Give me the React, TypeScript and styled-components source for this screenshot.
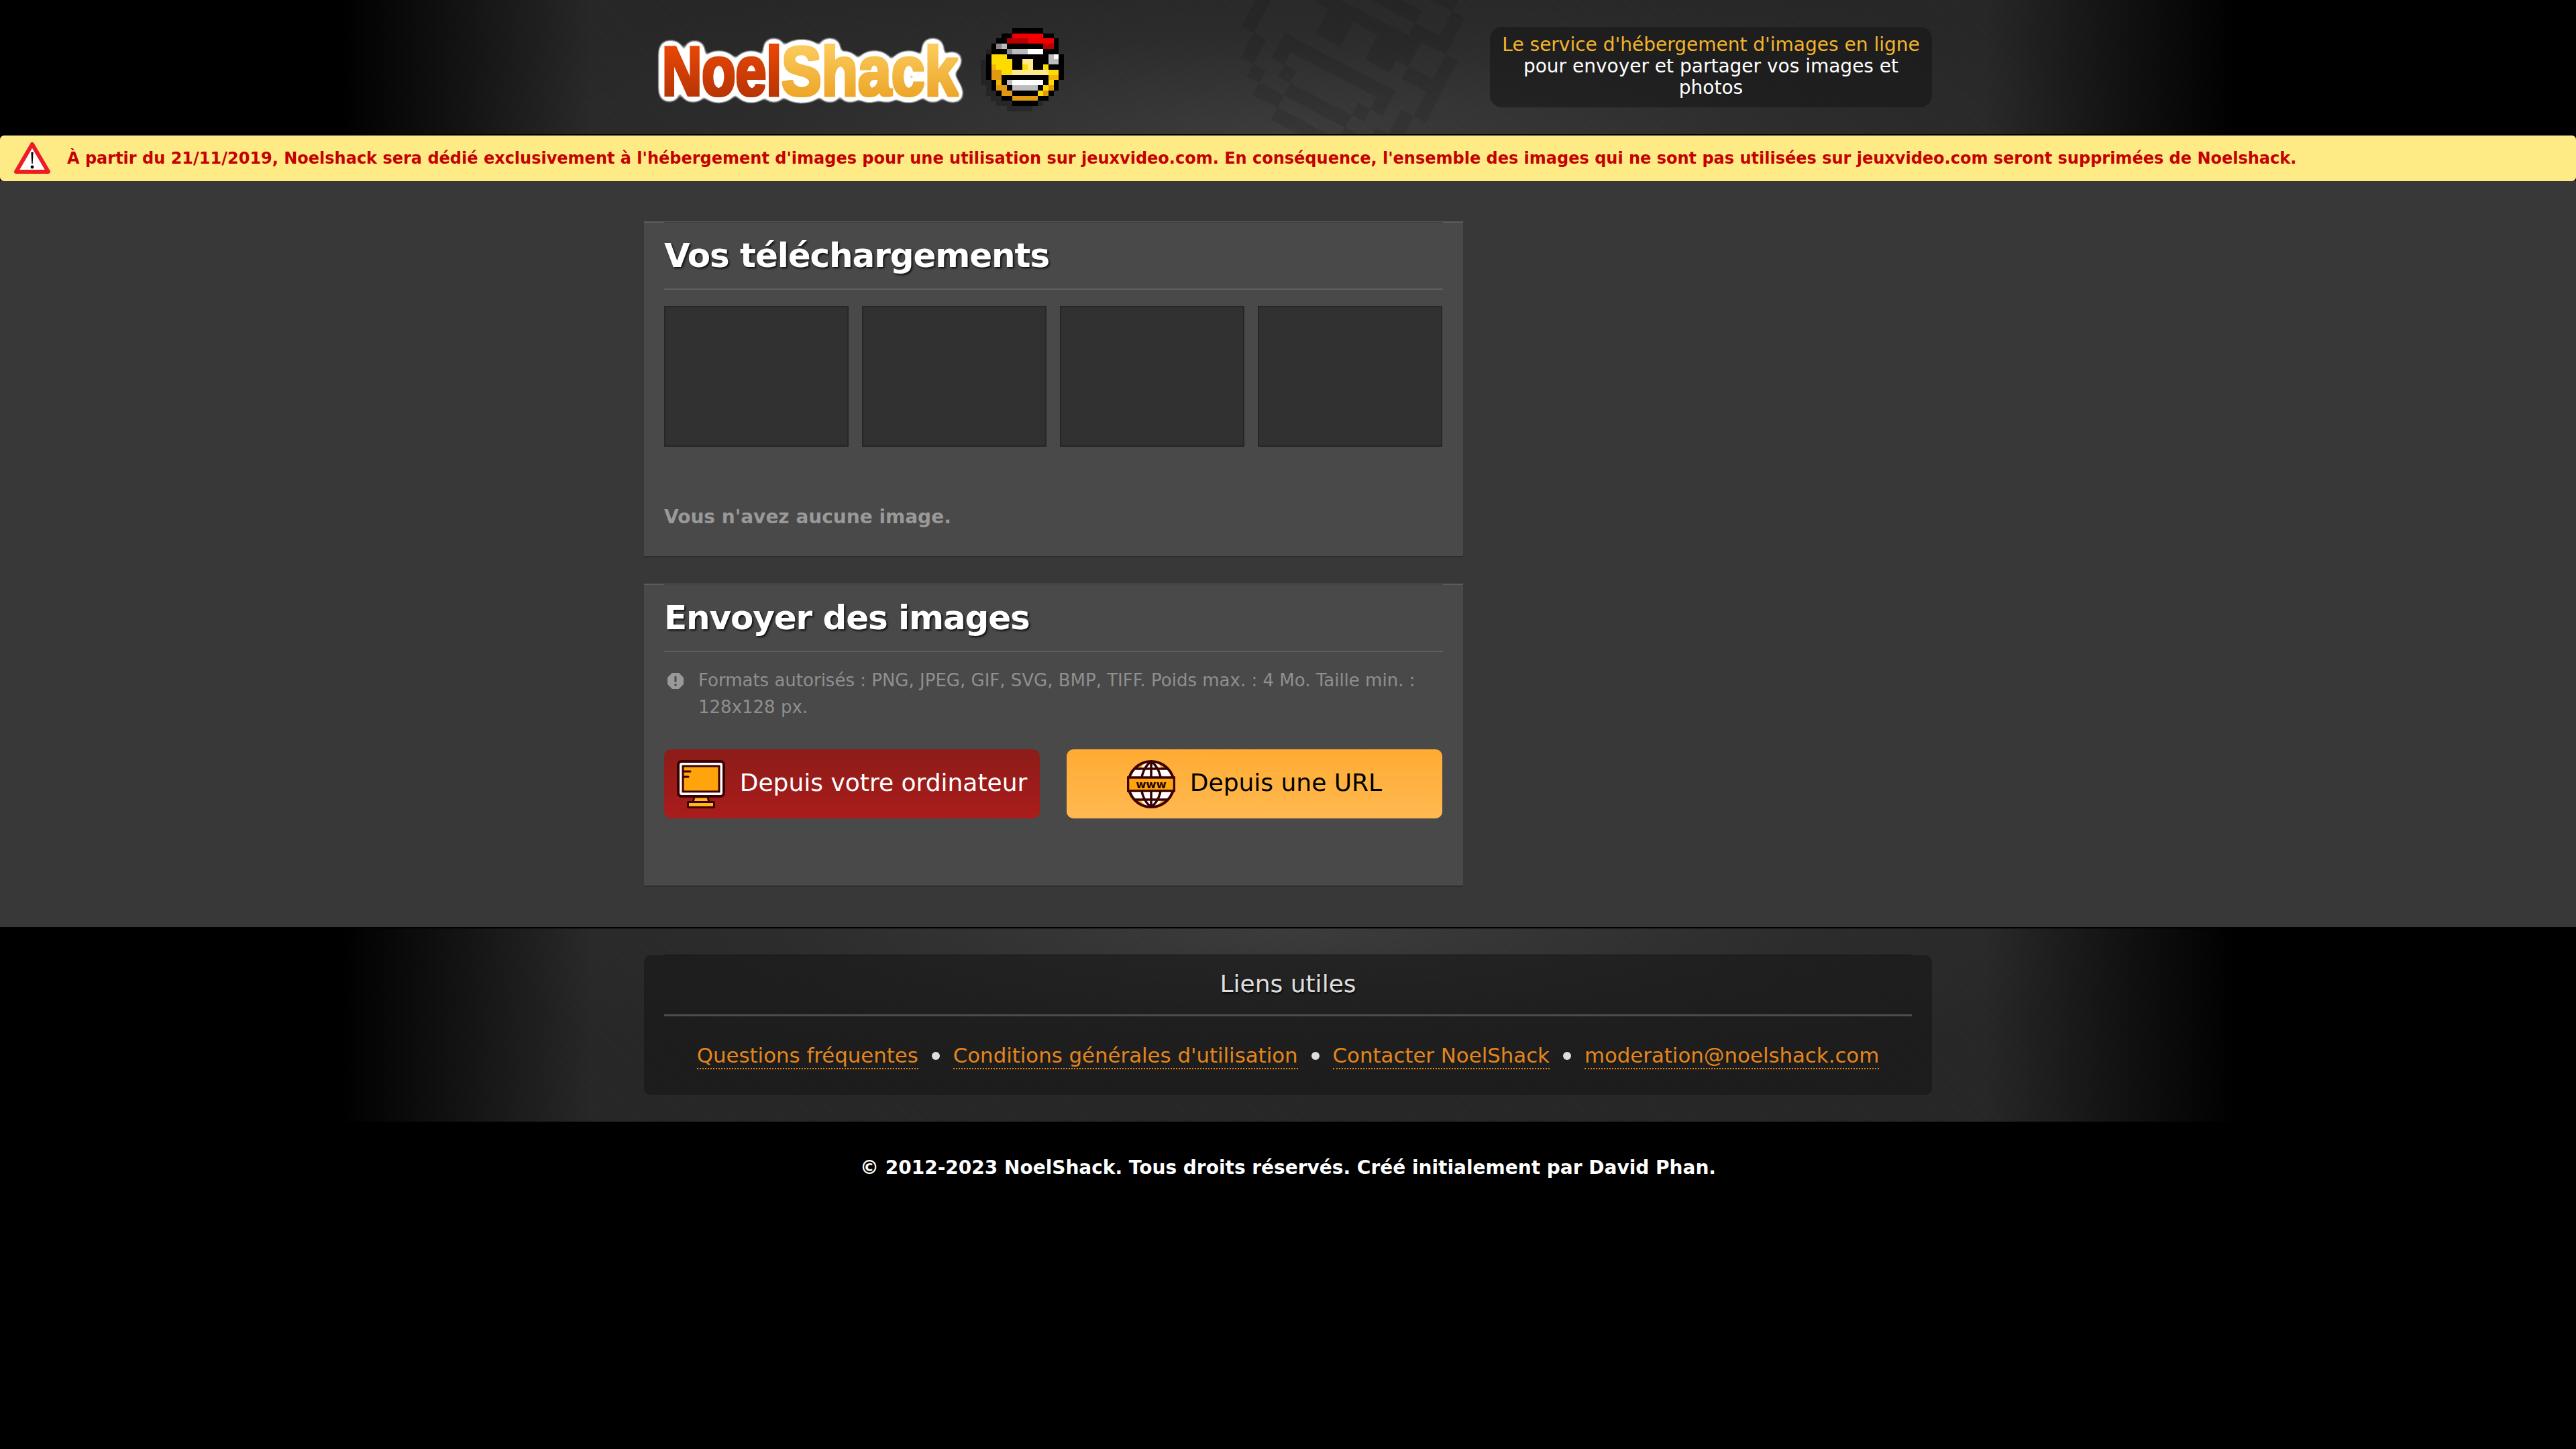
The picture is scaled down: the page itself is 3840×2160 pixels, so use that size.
import React from 'react';
import styled, { createGlobalStyle } from 'styled-components';

const GlobalStyle = createGlobalStyle`
  html, body {
    margin: 0;
    padding: 0;
    background: #000;
    font-family: "DejaVu Sans", sans-serif;
  }
  * { box-sizing: border-box; }
`;

const SMILEY = [
  '.....KKKKKK....',
  '...KKRRRRRRKK..',
  '..KKDDDDRRRRRK.',
  '.KGLKKKKKKKDDK.',
  '.KKKGLLLWWWKKK.',
  'KYYYKKKKKKKKLWK',
  'KYYYYKKPPKKKLLK',
  'KOYYYKKYPKKYKKK',
  'KAAYYPPPPPPPYYK',
  'KAAKKKKKKKKKOOK',
  '.KOKLWWWWWWKYK.',
  '.KAAKLLLLLKYAK.',
  '..KAAKKKKKYAK..',
  '...KKAAAAAKK...',
  '.....KKKKK.....',
];

const PIXEL_COLORS: Record<string, string> = {
  K: '#000000',
  R: '#f00000',
  D: '#b80000',
  G: '#8a8a8a',
  L: '#bdbdbd',
  W: '#ffffff',
  Y: '#ffdc00',
  O: '#f2b705',
  A: '#e09a12',
  P: '#ffe98a',
};

const PixelFace: React.FC<{ ghost?: boolean; className?: string }> = ({ ghost, className }) => (
  <svg className={className} viewBox="0 0 15 15" shapeRendering="crispEdges">
    {SMILEY.map((row, y) =>
      row.split('').map((c, x) => {
        if (c === '.') return null;
        if (ghost && c !== 'K') return null;
        return <rect key={`${x}-${y}`} x={x} y={y} width={1.02} height={1.02} fill={ghost ? '#000' : PIXEL_COLORS[c]} />;
      })
    )}
  </svg>
);

const bandBackground = (anchor: string) => `
  linear-gradient(90deg, #000 13.2%, rgba(0,0,0,0) 23%, rgba(0,0,0,0) 77%, #000 86.8%),
  repeating-linear-gradient(45deg, rgba(255,255,255,0.012) 0 1px, rgba(0,0,0,0.02) 1px 3px),
  radial-gradient(ellipse 1300px 240px at 50% ${anchor}, #3c3c3c 0%, #2c2c2c 60%, #272727 100%)
`;

const Header = styled.header`
  position: relative;
  height: 202px;
  overflow: hidden;
  border-bottom: 2px solid #000;
  background: ${bandBackground('100%')};
`;

const Wrap = styled.div`
  position: relative;
  width: 1920px;
  margin: 0 auto;
`;

const HeaderInner = styled(Wrap)`
  height: 200px;
  display: flex;
  align-items: center;
  justify-content: space-between;
`;

const Watermark = styled(PixelFace)`
  position: absolute;
  left: 897px;
  top: -90px;
  width: 310px;
  height: 310px;
  opacity: 0.085;
  transform: rotate(27.5deg);
`;

const Brand = styled.div`
  display: flex;
  align-items: center;
`;

const LogoArt = styled.svg`
  display: block;
  width: 480px;
  height: 110px;
  margin-left: 26px;
  overflow: visible;
`;

const LogoFace = styled(PixelFace)`
  width: 116px;
  height: 120px;
  margin-left: 4px;
  filter: drop-shadow(-8px 8px 0 rgba(0, 0, 0, 0.22));
`;

const Tagline = styled.div`
  position: relative;
  width: 659px;
  height: 120px;
  padding: 11px 10px 0;
  border-radius: 18px;
  background: rgba(20, 20, 20, 0.52);
  color: #fff;
  font-size: 28px;
  line-height: 32px;
  text-align: center;
`;

const TaglineAccent = styled.div`
  color: #f4b42c;
`;

const Notice = styled.div`
  display: flex;
  align-items: center;
  height: 68px;
  padding-left: 20px;
  border-radius: 6px;
  background: #ffeb85;
  color: #c40000;
  font-size: 24px;
  font-weight: 700;
`;

const NoticeIcon = styled.svg`
  width: 56px;
  height: 50px;
  margin-right: 24px;
  flex-shrink: 0;
`;

const Main = styled.main`
  height: 1114px;
  padding-top: 60px;
  border-bottom: 2px solid #000;
  background: #383838;
`;

const Panel = styled.section<{ $height: number }>`
  width: 1221px;
  height: ${(p) => p.$height}px;
  margin-bottom: 39px;
  padding: 0 30px;
  background: #494949;
  border-top: 2px solid #5c5c5c;
  border-bottom: 2px solid #2e2e2e;
`;

const PanelTitle = styled.h2`
  margin: 0;
  height: 100px;
  padding-top: 14px;
  border-bottom: 2px solid #5e5e5e;
  box-shadow: 0 -1px 0 #3f3f3f;
  color: #fff;
  font-size: 50px;
  line-height: 70px;
  letter-spacing: -1.1px;
  font-weight: 700;
  text-shadow: 2px 2px 3px rgba(0, 0, 0, 0.8);
`;

const TileRow = styled.div`
  display: grid;
  grid-template-columns: repeat(4, 275px);
  gap: 20px;
  margin-top: 24px;
`;

const Tile = styled.div`
  height: 210px;
  background: #313131;
  border: 2px solid #262626;
`;

const EmptyNote = styled.p`
  margin: 87px 0 0;
  color: #999;
  font-size: 28px;
  line-height: 36px;
  font-weight: 700;
`;

const FormatNote = styled.div`
  display: flex;
  margin-top: 22px;
  color: #8f8f8f;
  font-size: 26px;
  line-height: 40px;
`;

const FormatIcon = styled.svg`
  width: 26px;
  height: 26px;
  margin: 8px 21px 0 4px;
  flex-shrink: 0;
`;

const ButtonRow = styled.div`
  display: grid;
  grid-template-columns: 560px 560px;
  gap: 40px;
  margin-top: 43px;
`;

const UploadButton = styled.button<{ $variant: 'red' | 'orange' }>`
  display: flex;
  align-items: center;
  justify-content: center;
  gap: 22px;
  height: 103px;
  padding: 0;
  border: 0;
  border-radius: 10px;
  font-family: inherit;
  font-size: 36px;
  color: ${(p) => (p.$variant === 'red' ? '#fff' : '#000')};
  background: ${(p) =>
    p.$variant === 'red'
      ? 'linear-gradient(180deg, #8c1c18 0%, #aa1c1c 100%)'
      : 'linear-gradient(180deg, #ffab33 0%, #ffb950 100%)'};
`;

const ButtonLabel = styled.span`
  position: relative;
  top: -2px;
`;

const ButtonIcon = styled.svg`
  width: 72px;
  height: 72px;
  flex-shrink: 0;
`;

const FooterBand = styled.footer`
  height: 288px;
  padding-top: 40px;
  background: ${bandBackground('0%')};
`;

const LinksBox = styled.div`
  width: 1920px;
  height: 208px;
  margin: 0 auto;
  padding: 0 30px;
  border-radius: 10px;
  background: rgba(20, 20, 20, 0.52);
`;

const LinksTitle = styled.div`
  height: 91px;
  padding-top: 20px;
  border-bottom: 3px solid #4c4c4c;
  box-shadow: 0 -1px 0 #111;
  color: #ddd;
  font-size: 36px;
  line-height: 46px;
  text-align: center;
  text-shadow: 1px 2px 3px rgba(0, 0, 0, 0.8);
`;

const LinkRow = styled.nav`
  display: flex;
  justify-content: center;
  align-items: center;
  margin-top: 39px;
`;

const FooterLink = styled.a`
  color: #e4861c;
  font-size: 30.8px;
  line-height: 38px;
  border-bottom: 2px dotted #e4861c;
`;

const Bullet = styled.span`
  width: 12px;
  height: 12px;
  margin: 0 20px;
  border-radius: 50%;
  background: #ddd;
`;

const Copyright = styled.p`
  margin: 51px 0 0;
  color: #fff;
  font-size: 28px;
  line-height: 36px;
  font-weight: 700;
  text-align: center;
`;

const Page = styled.div`
  min-height: 2160px;
  background: #000;
`;

const links = [
  'Questions fréquentes',
  "Conditions générales d'utilisation",
  'Contacter NoelShack',
  'moderation@noelshack.com',
];

const Logo: React.FC = () => (
  <LogoArt viewBox="0 0 480 110">
    <defs>
      <linearGradient id="noelRed" x1="0" y1="0" x2="0" y2="1">
        <stop offset="0" stopColor="#f54a05" />
        <stop offset="1" stopColor="#a83005" />
      </linearGradient>
      <linearGradient id="noelGold" x1="0" y1="0" x2="0" y2="1">
        <stop offset="0" stopColor="#ffd468" />
        <stop offset="1" stopColor="#e89a1a" />
      </linearGradient>
      {/* fattens the letters and puts the white sticker edge behind them */}
      <filter id="logoSticker" filterUnits="userSpaceOnUse" x="-30" y="-20" width="540" height="150" colorInterpolationFilters="sRGB">
        <feMorphology in="SourceGraphic" operator="dilate" radius="2" result="fat" />
        <feGaussianBlur in="SourceAlpha" stdDeviation="6.5" result="soft" />
        <feComponentTransfer in="soft" result="edge">
          <feFuncA type="linear" slope="25" intercept="-0.5" />
        </feComponentTransfer>
        <feFlood floodColor="#fff" result="white" />
        <feComposite in="white" in2="edge" operator="in" result="sticker" />
        <feMerge>
          <feMergeNode in="sticker" />
          <feMergeNode in="fat" />
        </feMerge>
      </filter>
    </defs>
    <g filter="url(#logoSticker)" fontFamily="'Liberation Sans', sans-serif" fontWeight="700" fontSize="104">
      <text x="1" y="97" textLength="178" lengthAdjust="spacingAndGlyphs" fill="url(#noelRed)">Noel</text>
      <text x="179" y="97" textLength="263" lengthAdjust="spacingAndGlyphs" fill="url(#noelGold)">Shack</text>
    </g>
  </LogoArt>
);

const MonitorIcon: React.FC = () => (
  <ButtonIcon viewBox="0 0 72 72">
    <rect x="2" y="2" width="68" height="52" rx="5" fill="#fff" stroke="#3a0000" strokeWidth="4" />
    <rect x="9" y="9" width="54" height="38" fill="#ffa40c" stroke="#3a0000" strokeWidth="3" />
    <path d="M11 17h9M11 25h6" stroke="#3a0000" strokeWidth="3" strokeLinecap="round" />
    <path d="M26 55h20l2 8H24z" fill="#ffb81c" stroke="#3a0000" strokeWidth="3" strokeLinejoin="round" />
    <rect x="16.5" y="62.5" width="39" height="8" rx="1" fill="#ffb81c" stroke="#3a0000" strokeWidth="3" />
  </ButtonIcon>
);

const GlobeIcon: React.FC = () => (
  <ButtonIcon viewBox="0 0 72 72">
    <defs>
      <clipPath id="globeClip">
        <ellipse cx="36" cy="36" rx="34" ry="34" />
      </clipPath>
    </defs>
    <circle cx="36" cy="36" r="34" fill="#ffa40c" />
    <g clipPath="url(#globeClip)">
      <ellipse cx="36" cy="36" rx="22" ry="34" fill="#fff" />
      <rect x="0" y="14" width="72" height="12" fill="#fff" />
      <rect x="0" y="46" width="72" height="12" fill="#fff" />
      <path d="M36 0v72M36 2C16 16 16 56 36 70M36 2c20 14 20 54 0 68" fill="none" stroke="#3a0000" strokeWidth="3.5" />
      <path d="M0 13h72M0 59h72" stroke="#3a0000" strokeWidth="3.5" />
    </g>
    <circle cx="36" cy="36" r="34" fill="none" stroke="#3a0000" strokeWidth="4" />
    <rect x="1.5" y="26" width="69" height="20" fill="#ffa40c" stroke="#3a0000" strokeWidth="3.5" />
    <text x="36" y="41.5" textAnchor="middle" fontFamily="'DejaVu Sans', sans-serif" fontWeight="700" fontSize="16.5" fill="#1a0000">www</text>
  </ButtonIcon>
);

const App: React.FC = () => {
  return (
    <Page>
      <GlobalStyle />
      <Header>
        <HeaderInner>
          <Watermark ghost />
          <Brand>
            <Logo />
            <LogoFace />
          </Brand>
          <Tagline>
            <TaglineAccent>Le service d'hébergement d'images en ligne</TaglineAccent>
            pour envoyer et partager vos images et photos
          </Tagline>
        </HeaderInner>
      </Header>
      <Notice>
        <NoticeIcon viewBox="0 0 56 50">
          <path d="M28 4 L52 45 H4z" fill="#fff" stroke="#ee1c25" strokeWidth="6" strokeLinejoin="round" />
          <path d="M26.4 16h3.2l-.9 17h-1.4z" fill="#000" />
          <circle cx="28" cy="38" r="2.4" fill="#000" />
        </NoticeIcon>
        À partir du 21/11/2019, Noelshack sera dédié exclusivement à l'hébergement d'images pour une utilisation sur jeuxvideo.com. En conséquence, l'ensemble des images qui ne sont pas utilisées sur jeuxvideo.com seront supprimées de Noelshack.
      </Notice>
      <Main>
        <Wrap>
          <Panel $height={501}>
            <PanelTitle>Vos téléchargements</PanelTitle>
            <TileRow>
              <Tile />
              <Tile />
              <Tile />
              <Tile />
            </TileRow>
            <EmptyNote>Vous n'avez aucune image.</EmptyNote>
          </Panel>
          <Panel $height={452}>
            <PanelTitle>Envoyer des images</PanelTitle>
            <FormatNote>
              <FormatIcon viewBox="0 0 26 26">
                <path d="M8 1h10l7 7v10l-7 7H8l-7-7V8z" fill="#999" />
                <rect x="11.5" y="6" width="3" height="9" rx="1" fill="#4a4a4a" />
                <circle cx="13" cy="19" r="1.8" fill="#4a4a4a" />
              </FormatIcon>
              <span>Formats autorisés : PNG, JPEG, GIF, SVG, BMP, TIFF. Poids max. : 4 Mo. Taille min. : 128x128 px.</span>
            </FormatNote>
            <ButtonRow>
              <UploadButton $variant="red">
                <MonitorIcon />
                <ButtonLabel>Depuis votre ordinateur</ButtonLabel>
              </UploadButton>
              <UploadButton $variant="orange">
                <GlobeIcon />
                <ButtonLabel>Depuis une URL</ButtonLabel>
              </UploadButton>
            </ButtonRow>
          </Panel>
        </Wrap>
      </Main>
      <FooterBand>
        <LinksBox>
          <LinksTitle>Liens utiles</LinksTitle>
          <LinkRow>
            {links.map((label, i) => (
              <React.Fragment key={label}>
                {i > 0 && <Bullet />}
                <FooterLink>{label}</FooterLink>
              </React.Fragment>
            ))}
          </LinkRow>
        </LinksBox>
      </FooterBand>
      <Copyright>© 2012-2023 NoelShack. Tous droits réservés. Créé initialement par David Phan.</Copyright>
    </Page>
  );
};

export default App;
